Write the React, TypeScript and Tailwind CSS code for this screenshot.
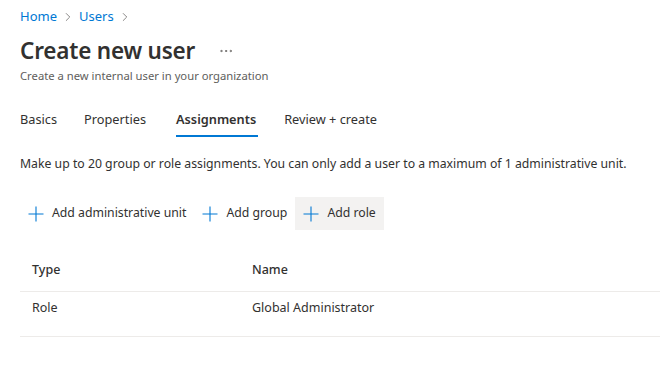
import { ChevronRight, MoreHorizontal } from "lucide-react";

const font = { fontFamily: '"Segoe UI", "Noto Sans", sans-serif' };

function PlusIcon() {
  return (
    <svg width="16" height="16" viewBox="0 0 16 16" className="text-[#0078d4] shrink-0">
      <path d="M8 0.5v15M0.5 8h15" stroke="currentColor" strokeWidth="1.1" fill="none" />
    </svg>
  );
}

function CommandButton({ label, active }: { label: string; active?: boolean }) {
  return (
    <button
      className={`flex items-center gap-2 h-[33px] px-2 text-[12.25px] text-[#323130] ${active ? "bg-[#f3f2f1]" : ""}`}
    >
      <PlusIcon />
      <span>{label}</span>
    </button>
  );
}

const tabs = ["Basics", "Properties", "Assignments", "Review + create"];

export default function App() {
  return (
    <div className="w-[660px] h-[381px] bg-white overflow-hidden pl-5 pt-[7px]" style={font}>
      <nav className="flex items-center gap-1 text-[13px] text-[#0078d4] h-5">
        <span>Home</span>
        <ChevronRight className="w-3.5 h-3.5 text-[#605e5c]" strokeWidth={1.25} />
        <span>Users</span>
        <ChevronRight className="w-3.5 h-3.5 text-[#605e5c]" strokeWidth={1.25} />
      </nav>

      <div className="flex items-center mt-[8px] h-8">
        <h1 className="text-[22.5px] font-semibold text-[#323130] tracking-[-0.2px]">Create new user</h1>
        <MoreHorizontal className="w-4 h-4 ml-[23px] text-[#605e5c]" strokeWidth={1.25} />
      </div>
      <p className="text-[11.25px] text-[#605e5c] leading-4 mt-[1px]">Create a new internal user in your organization</p>

      <div className="flex mt-[25px] text-[12.75px] text-[#323130]">
        {tabs.map((t, i) => (
          <div key={t} className={`flex flex-col ${i === 1 ? "ml-[27px]" : i === 2 ? "ml-[30px]" : i === 3 ? "ml-[28px]" : ""}`}>
            <span className={`leading-5 ${t === "Assignments" ? "font-semibold" : ""}`}>{t}</span>
            <span className={`h-[2px] mt-[6px] -mr-[2px] ${t === "Assignments" ? "bg-[#0078d4]" : ""}`} />
          </div>
        ))}
      </div>

      <p className="text-[12.25px] text-[#323130] mt-[17px] leading-5">
        Make up to 20 group or role assignments. You can only add a user to a maximum of 1 administrative unit.
      </p>

      <div className="flex items-center mt-[23px]">
        <CommandButton label="Add administrative unit" />
        <CommandButton label="Add group" />
        <CommandButton label="Add role" active />
      </div>

      <div className="mt-[22px] text-[12.5px] text-[#323130]">
        <div className="grid grid-cols-[220px_1fr] px-3 h-[40px] items-start pt-[8px] border-b border-[#edebe9]">
          <span className="leading-5 font-medium">Type</span>
          <span className="leading-5 font-medium">Name</span>
        </div>
        <div className="grid grid-cols-[220px_1fr] px-3 h-[45px] items-start pt-[6px] border-b border-[#edebe9]">
          <span className="leading-5">Role</span>
          <span className="leading-5">Global Administrator</span>
        </div>
      </div>
    </div>
  );
}
